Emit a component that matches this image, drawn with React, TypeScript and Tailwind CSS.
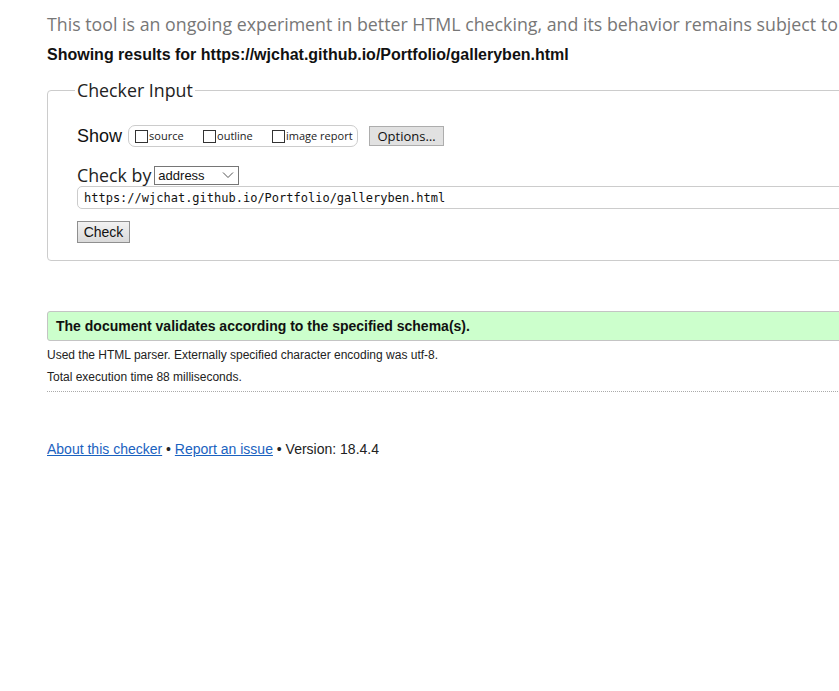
import React from "react";

const arial = { fontFamily: '"Liberation Sans", Arial, sans-serif' };

function Box({ label }: { label: string }) {
  return (
    <span className="flex items-center">
      <span className="inline-block w-[13px] h-[13px] border border-[#333] bg-white" />
      <span className="ml-[1px] text-[11px] text-[#222] font-['Open_Sans',sans-serif]">{label}</span>
    </span>
  );
}

export default function App() {
  return (
    <div className="w-[839px] h-[691px] overflow-hidden bg-white">
      <div className="w-[1200px] pl-[47px] text-[#111]">
        <div className="pt-[12px] h-[36px] leading-[24px] text-[17.8px] text-[#777] font-['Open_Sans',sans-serif] whitespace-nowrap">
          This tool is an ongoing experiment in better HTML checking, and its behavior remains subject to
        </div>
        <div className="mt-[8px] h-[22px] leading-[22px] text-[16px] font-bold text-[#111] whitespace-nowrap" style={arial}>
          Showing results for https://wjchat.github.io/Portfolio/galleryben.html
        </div>

        <fieldset className="mt-[13px] w-[1100px] border border-[#cccccc] rounded-[4px] pl-[29px] pr-[10px] pt-[24px] pb-[17px]">
          <legend className="ml-[-2px] px-[2px] leading-[22px] text-[17.8px] text-[#222] font-['Open_Sans',sans-serif]">
            Checker Input
          </legend>
          <div className="flex items-center h-[22px]">
            <span className="text-[18px] text-[#111] leading-[22px]" style={arial}>Show</span>
            <div className="ml-[6px] w-[230px] h-[22px] border border-[#cccccc] rounded-[7px] flex items-center pl-[6px]">
              <span className="w-[68px]"><Box label="source" /></span>
              <span className="w-[69px]"><Box label="outline" /></span>
              <Box label="image report" />
            </div>
            <button className="ml-[11px] w-[75px] h-[20px] border border-[#adadad] bg-[#e1e1e1] text-[13px] text-[#111] leading-[18px] font-['Open_Sans',sans-serif]">
              Options…
            </button>
          </div>

          <div className="mt-[18px] flex items-center h-[20px]">
            <span className="text-[17.8px] text-[#222] leading-[20px] font-['Open_Sans',sans-serif]">Check by</span>
            <div className="ml-[3px] w-[85px] h-[19px] border border-[#767676] bg-white flex items-center justify-between pl-[3px] pr-[4px]">
              <span className="text-[13px] text-[#111] leading-[17px]" style={arial}>address</span>
              <svg width="12" height="8" viewBox="0 0 12 8" fill="none">
                <path d="M1 1.5 L6 6.5 L11 1.5" stroke="#555" strokeWidth="1" />
              </svg>
            </div>
          </div>

          <div className="mt-[1px] h-[23px] border border-[#cccccc] rounded-[5px] flex items-center pl-[6px] pt-[1px] text-[12px] text-[#111] font-['DejaVu_Sans_Mono',monospace]">
            https://wjchat.github.io/Portfolio/galleryben.html
          </div>

          <button
            className="mt-[12px] block w-[53px] h-[22px] border border-[#8f8f8f] bg-gradient-to-b from-[#f2f2f2] to-[#dadada] text-[14px] text-[#111] leading-[20px]"
            style={arial}
          >
            Check
          </button>
        </fieldset>

        <div
          className="mt-[50px] h-[30px] border border-[#c4c4c4] rounded-l-[3px] bg-[#ccffcc] flex items-center pl-[8px] text-[14px] font-bold text-[#111]"
          style={arial}
        >
          The document validates according to the specified schema(s).
        </div>
        <div className="mt-[3px] leading-[22px] text-[12px] text-[#222]" style={arial}>
          Used the HTML parser. Externally specified character encoding was utf-8.
        </div>
        <div className="leading-[22px] text-[12px] text-[#222]" style={arial}>
          Total execution time 88 milliseconds.
        </div>
        <div className="mt-[3px] border-b border-dotted border-[#aaaaaa]" />

        <div className="mt-[47px] leading-[20px] text-[14px] text-[#222]" style={arial}>
          <a href="#" className="text-[#1a62c0] underline">About this checker</a>
          {" • "}
          <a href="#" className="text-[#1a62c0] underline">Report an issue</a>
          {" • Version: 18.4.4"}
        </div>
      </div>
    </div>
  );
}
